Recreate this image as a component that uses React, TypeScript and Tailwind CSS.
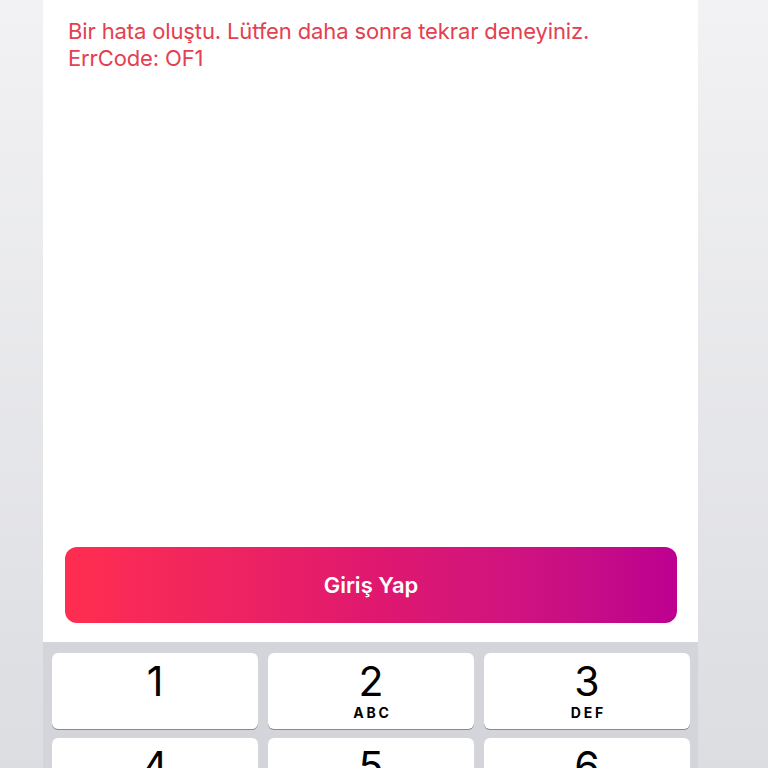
const keys = [
  { n: "1", l: "" },
  { n: "2", l: "ABC" },
  { n: "3", l: "DEF" },
  { n: "4", l: "GHI" },
  { n: "5", l: "JKL" },
  { n: "6", l: "MNO" },
  { n: "7", l: "PQRS" },
  { n: "8", l: "TUV" },
  { n: "9", l: "WXYZ" },
];

function Key({ n, l }: { n: string; l: string }) {
  return (
    <div className="h-[76px] rounded-[6px] bg-white shadow-[0_1px_0_#898a8d] flex flex-col items-center pt-[8px] text-black">
      <span className="text-[41px] leading-none font-normal">{n}</span>
      {l && (
        <span className="mt-[4px] text-[14px] leading-none font-bold tracking-[0.2em] pl-[0.2em]">
          {l}
        </span>
      )}
    </div>
  );
}

export default function App() {
  return (
    <div
      className="h-[768px] w-full overflow-hidden bg-gradient-to-b from-[#f2f2f4] to-[#dcdde1] flex"
      style={{ fontFamily: "Inter, 'Noto Sans', sans-serif" }}
    >
      <div className="w-[655px] shrink-0 ml-[43px] flex flex-col">
        <div className="h-[642px] shrink-0 bg-white flex flex-col">
          <div className="pl-[25px] pt-[18px] text-[22px] leading-[27px] tracking-[-0.006em] text-[#e34050]">
            <p>Bir hata oluştu. Lütfen daha sonra tekrar deneyiniz.</p>
            <p>ErrCode: OF1</p>
          </div>
          <div className="flex-1" />
          <button className="ml-[22px] mr-[21px] mb-[19px] h-[76px] rounded-[12px] bg-gradient-to-r from-[#ff2d4f] via-[#e0186e] to-[#bd0090] text-white text-[22px] font-semibold">
            Giriş Yap
          </button>
        </div>
        <div className="shrink-0 bg-[#d3d5da] pl-[9px] pr-[8px] pt-[11px] pb-[20px]">
          <div className="grid grid-cols-3 gap-x-[10px] gap-y-[9px]">
            {keys.map((k) => (
              <Key key={k.n} n={k.n} l={k.l} />
            ))}
          </div>
        </div>
      </div>
    </div>
  );
}
